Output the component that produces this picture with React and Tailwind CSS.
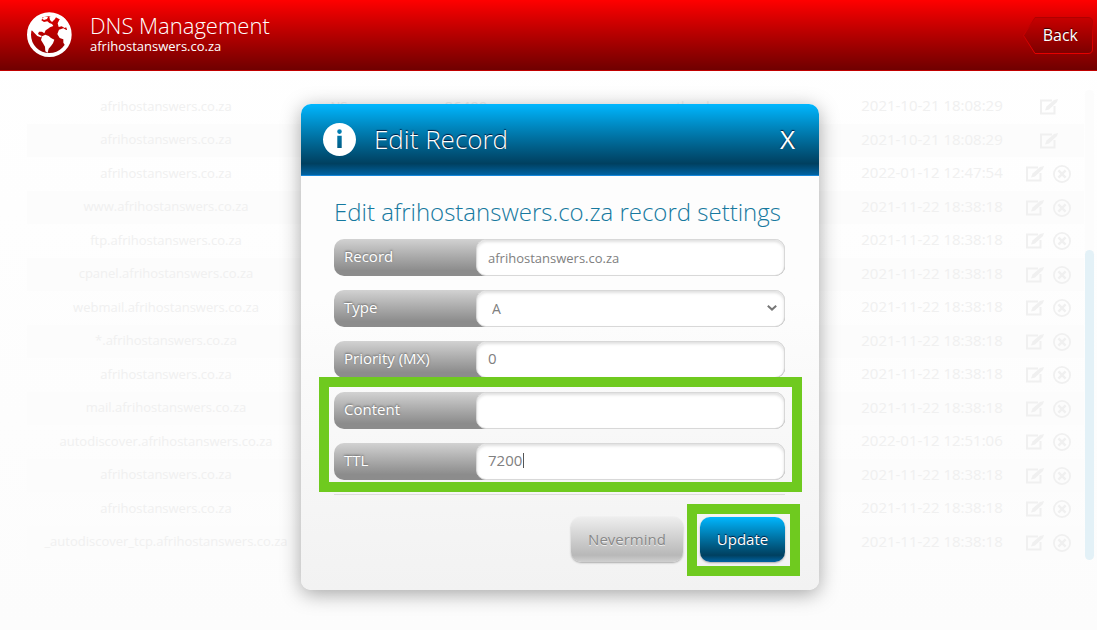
import { useState } from "react";

const records = [
  { name: "afrihostanswers.co.za", type: "NS", ttl: 86400, content: "ns.otherdns.com", updated: "2021-10-21 18:08:29", locked: true },
  { name: "afrihostanswers.co.za", updated: "2021-10-21 18:08:29", locked: true },
  { name: "afrihostanswers.co.za", updated: "2022-01-12 12:47:54" },
  { name: "www.afrihostanswers.co.za", updated: "2021-11-22 18:38:18" },
  { name: "ftp.afrihostanswers.co.za", updated: "2021-11-22 18:38:18" },
  { name: "cpanel.afrihostanswers.co.za", updated: "2021-11-22 18:38:18" },
  { name: "webmail.afrihostanswers.co.za", updated: "2021-11-22 18:38:18" },
  { name: "*.afrihostanswers.co.za", updated: "2021-11-22 18:38:18" },
  { name: "afrihostanswers.co.za", updated: "2021-11-22 18:38:18" },
  { name: "mail.afrihostanswers.co.za", updated: "2021-11-22 18:38:18" },
  { name: "autodiscover.afrihostanswers.co.za", updated: "2022-01-12 12:51:06" },
  { name: "afrihostanswers.co.za", updated: "2021-11-22 18:38:18" },
  { name: "afrihostanswers.co.za", updated: "2021-11-22 18:38:18" },
  { name: "_autodiscover_tcp.afrihostanswers.co.za", updated: "2021-11-22 18:38:18" },
];

function GlobeIcon() {
  return (
    <svg viewBox="0 0 162 162" className="h-[54px] w-[54px] shrink-0" fill="#fff" aria-hidden="true">
      <circle cx="82" cy="80" r="61" fill="none" stroke="#fff" strokeWidth="12" />
      <path d="M22 66 Q30 36 56 24 L62 30 L58 37 L66 42 L76 40 L82 45 L90 48 L94 54 L84 58 L78 62 L71 67 L67 76 L60 71 L51 71 L48 78 L54 82 L60 84 L56 88 L46 84 L38 76 L31 68 Z" />
      <path d="M60 32 L68 25 L78 27 L75 33 L66 36 Z M82 26 L94 20 L104 23 L99 33 L90 42 L84 36 Z" />
      <path d="M60 85 L70 80 L80 84 L87 90 L97 95 L93 106 L87 114 L80 122 L77 134 L70 130 L69 116 L63 106 L57 96 Z" />
      <path d="M107 46 L112 36 L122 26 Q138 40 144 60 L135 56 L128 60 L119 55 L110 57 Z" />
      <path d="M111 65 L124 61 L133 66 L145 64 L145 92 L138 108 L130 113 L124 104 L124 94 L113 90 L106 78 Z" />
    </svg>
  );
}

function InfoIcon() {
  return (
    <svg viewBox="0 0 33 33" className="h-[33px] w-[33px] shrink-0" aria-hidden="true">
      <path
        fill="#fff"
        fillRule="evenodd"
        d="M16.5 0a16.5 16.5 0 1 1 0 33a16.5 16.5 0 1 1 0-33ZM16.5 6.3a2.3 2.3 0 1 0 0 4.6a2.3 2.3 0 1 0 0-4.6ZM14.3 12.8V25h4.4V12.8Z"
      />
    </svg>
  );
}

function EditIcon() {
  return (
    <svg viewBox="0 0 18 16" className="h-4 w-[18px]" aria-hidden="true">
      <path d="M12 1.5H1V14.5H14.5V7" fill="none" stroke="currentColor" strokeWidth="2" />
      <path d="M5 11.5L6.5 7.5L14 1L18 0L17 3L9 10.5Z" fill="currentColor" />
    </svg>
  );
}

function DeleteIcon() {
  return (
    <svg viewBox="0 0 18 18" className="h-[18px] w-[18px]" fill="none" stroke="currentColor" aria-hidden="true">
      <circle cx="9" cy="9" r="8.1" strokeWidth="1.8" />
      <path d="M5.4 5.4L12.6 12.6M12.6 5.4L5.4 12.6" strokeWidth="2.4" />
    </svg>
  );
}

function Field({ id, label, children }) {
  return (
    <div className="flex h-[37px] rounded-[10px] bg-linear-to-b from-[#d2d2d2] to-[#8c8c8c] to-85%">
      <label
        htmlFor={id}
        className="w-[142px] shrink-0 pl-[10px] text-[15px] leading-[34px] text-white [text-shadow:0_-1px_2px_#666]"
      >
        {label}
      </label>
      {children}
    </div>
  );
}

const inputClass =
  "h-full w-full min-w-0 rounded-[10px] border border-[#d8d8d8] bg-white pr-[11px] text-[#808080] shadow-[inset_0_2px_3px_#e0e0e0] outline-none";

function RecordsTable() {
  return (
    <table className="min-w-0 flex-1 table-fixed text-center text-[13px] text-[#f0f0f0]">
      <colgroup>
        <col className="w-[278px]" />
        <col className="w-[68px]" />
        <col className="w-[186px]" />
        <col />
        <col className="w-[174px]" />
        <col className="w-[65px]" />
      </colgroup>
      <tbody>
        {records.map((r, i) => (
          <tr key={i} className="h-[34px] even:h-[33px] even:bg-[#fcfcfc]">
            <td className="pb-px whitespace-nowrap">{r.name}</td>
            <td className="pb-px">{r.type}</td>
            <td className="pb-px text-[15px]">{r.ttl}</td>
            <td className="pb-px">{r.content}</td>
            <td className="pb-[3px] text-[15px] whitespace-nowrap">{r.updated}</td>
            <td>
              <div className="flex items-center justify-center gap-[9px] pr-[6px]">
                <button type="button" aria-label="Edit record">
                  <EditIcon />
                </button>
                {!r.locked && (
                  <button type="button" aria-label="Delete record">
                    <DeleteIcon />
                  </button>
                )}
              </div>
            </td>
          </tr>
        ))}
      </tbody>
    </table>
  );
}

function EditRecordModal() {
  const [record, setRecord] = useState({
    name: "afrihostanswers.co.za",
    type: "A",
    priority: "0",
    content: "",
    ttl: "7200",
  });

  const update = (key) => (e) => setRecord({ ...record, [key]: e.target.value });

  return (
    <div
      role="dialog"
      aria-label="Edit Record"
      className="w-[518px] overflow-hidden rounded-[10px] bg-linear-to-b from-[#fdfdfd] from-40% to-[#f2f2f2] shadow-[0_4px_20px_rgba(0,0,0,0.35)]"
    >
      <div className="flex h-[72px] items-center border-b border-[#1687d9] bg-linear-to-b from-[#00b7ff] via-[#004060] via-84% to-[#0063a3] pr-6 pl-[22px] text-white">
        <InfoIcon />
        <h2 className="ml-[18px] flex-1 text-[26px] font-light [text-shadow:0_-1px_1px_#013]">
          Edit Record
        </h2>
        <button type="button" aria-label="Close" className="text-[26px] [text-shadow:0_-1px_1px_#013]">
          X
        </button>
      </div>

      <form className="pt-5 pr-[34px] pb-7 pl-[33px]" onSubmit={(e) => e.preventDefault()}>
        <h3 className="mb-[11px] text-[24px] leading-8 font-light whitespace-nowrap text-[#16799f]">
          Edit afrihostanswers.co.za record settings
        </h3>

        <div className="flex flex-col gap-[14px]">
          <Field id="record" label="Record">
            <input
              id="record"
              className={`${inputClass} pl-[11px] text-[13px]`}
              value={record.name}
              onChange={update("name")}
            />
          </Field>
          <Field id="type" label="Type">
            <div className="relative h-full w-full">
              <select
                id="type"
                className={`${inputClass} appearance-none pl-[15px] text-[14px]`}
                value={record.type}
                onChange={update("type")}
              >
                <option>A</option>
                <option>CNAME</option>
                <option>MX</option>
                <option>TXT</option>
              </select>
              <svg
                viewBox="0 0 10 6"
                className="pointer-events-none absolute top-[15px] right-[8px] h-[6px] w-[10px]"
                aria-hidden="true"
              >
                <path d="M0.8 0.8L5 4.6L9.2 0.8" fill="none" stroke="#777" strokeWidth="2" />
              </svg>
            </div>
          </Field>
          <Field id="priority" label="Priority (MX)">
            <input
              id="priority"
              className={`${inputClass} pb-[3px] pl-[11px] text-[15px]`}
              value={record.priority}
              onChange={update("priority")}
            />
          </Field>

          <div className="relative flex flex-col gap-[14px]">
            <Field id="content" label="Content">
              <input
                id="content"
                className={`${inputClass} pb-[3px] pl-[11px] text-[15px]`}
                value={record.content}
                onChange={update("content")}
              />
            </Field>
            <Field id="ttl" label="TTL">
              <div className="relative h-full w-full">
                <input
                  id="ttl"
                  className={`${inputClass} pb-[3px] pl-[11px] text-[15px]`}
                  value={record.ttl}
                  onChange={update("ttl")}
                />
                <span className="absolute top-[10px] left-[47px] h-[15px] w-px bg-[#555]" />
              </div>
            </Field>
            <div className="pointer-events-none absolute -top-[15px] -right-[17px] -bottom-[12px] -left-[15px] border-[10px] border-[#6fca1f]" />
          </div>
        </div>

        <hr className="mt-[14px] border-[#dcdcdc]" />

        <div className="mt-[22px] flex justify-end gap-[17px]">
          <button
            type="button"
            className="h-[45px] w-28 rounded-[10px] bg-linear-to-b from-[#eee] via-[#b8b8b8] via-85% to-[#d0d0d0] text-[15px] text-[#888] shadow-[0_1px_2px_#aaa] [text-shadow:0_1px_0_#eee]"
          >
            Nevermind
          </button>
          <div className="relative">
            <button
              type="submit"
              className="h-[45px] w-[85px] rounded-[10px] bg-linear-to-b from-[#00b7ff] via-[#004060] via-85% to-[#0063a3] text-[15px] text-white shadow-[0_1px_2px_#aaa] [text-shadow:0_-1px_1px_#013]"
            >
              Update
            </button>
            <div className="pointer-events-none absolute -top-[13px] -right-[15px] -bottom-[14px] -left-[13px] border-[10px] border-[#6fca1f]" />
          </div>
        </div>
      </form>
    </div>
  );
}

export default function App() {
  return (
    <div className="relative min-h-screen bg-linear-to-b from-white to-[#fcfcfc] font-['Open_Sans','Noto_Sans',sans-serif]">
      <header className="flex h-[71px] items-center border-b border-[#c00000] bg-linear-to-b from-[#ff0000] to-[#700000] pr-1 pl-[22px] text-white">
        <GlobeIcon />
        <div className="ml-[14px] flex-1 pb-1">
          <h1 className="text-[22px] leading-[26px] font-light">DNS Management</h1>
          <p className="text-[13px] leading-4">afrihostanswers.co.za</p>
        </div>
        <a href="#" className="relative flex h-[37px] w-[70px] items-center justify-end pr-[15px] text-[16px]">
          <svg viewBox="0 0 70 37" className="absolute inset-0 h-full w-full" aria-hidden="true">
            <defs>
              <linearGradient id="back" x1="0" y1="0" x2="0" y2="1">
                <stop offset="0" stopColor="#c80000" />
                <stop offset="1" stopColor="#7c0000" />
              </linearGradient>
              <linearGradient id="backEdge" x1="0" y1="0" x2="0" y2="1">
                <stop offset="0" stopColor="#b00000" />
                <stop offset="1" stopColor="#e60000" />
              </linearGradient>
            </defs>
            <path
              d="M0.5 18.5L12 0.5H65Q69.5 0.5 69.5 5V32Q69.5 36.5 65 36.5H12Z"
              fill="url(#back)"
              stroke="url(#backEdge)"
            />
          </svg>
          <span className="relative [text-shadow:0_-1px_1px_#300]">Back</span>
        </a>
      </header>

      <main className="flex items-start pt-[19px] pr-[3px] pl-[27px]">
        <RecordsTable />
        <div className="ml-px h-[470px] w-[9px] rounded-full bg-[#fcfcfc] pt-[160px]">
          <div className="h-[310px] rounded-full bg-[#e3f1f7]" />
        </div>
      </main>

      <div className="absolute inset-x-0 top-[104px] flex justify-center pl-[23px]">
        <EditRecordModal />
      </div>
    </div>
  );
}
